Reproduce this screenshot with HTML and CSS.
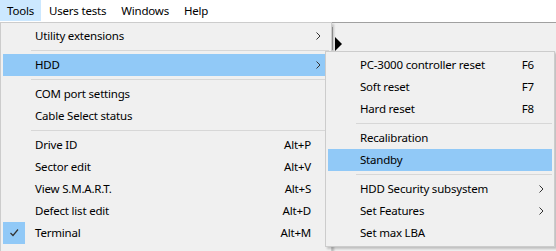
FILE: index.html
```html
<!DOCTYPE html>
<html lang="en">
<head>
    <meta charset="UTF-8">
    <meta name="viewport" content="width=device-width, initial-scale=1.0">
    <title>PC-3000 - Tools</title>
    <link rel="stylesheet" href="styles.css">
</head>
<body>
    <nav class="menubar">
        <span class="menubar-item active">Tools</span>
        <span class="menubar-item">Users tests</span>
        <span class="menubar-item">Windows</span>
        <span class="menubar-item">Help</span>
    </nav>

    <main class="workspace">
        <div class="grid-indicator"></div>
        <div class="row-marker"></div>
    </main>

    <!-- Tools dropdown -->
    <div class="menu menu-tools">
        <div class="menu-item"><span>Utility extensions</span><span class="shortcut"></span><span class="arrow"><svg width="5" height="8" viewBox="0 0 5 8"><polyline points="0.5,0.5 4,4 0.5,7.5" /></svg></span></div>
        <div class="separator"></div>
        <div class="menu-item highlight"><span>HDD</span><span class="shortcut"></span><span class="arrow"><svg width="5" height="8" viewBox="0 0 5 8"><polyline points="0.5,0.5 4,4 0.5,7.5" /></svg></span></div>
        <div class="separator"></div>
        <div class="menu-item"><span>COM port settings</span><span class="shortcut"></span><span class="arrow"></span></div>
        <div class="menu-item"><span>Cable Select status</span><span class="shortcut"></span><span class="arrow"></span></div>
        <div class="separator"></div>
        <div class="menu-item"><span>Drive ID</span><span class="shortcut">Alt+P</span><span class="arrow"></span></div>
        <div class="menu-item"><span>Sector edit</span><span class="shortcut">Alt+V</span><span class="arrow"></span></div>
        <div class="menu-item"><span>View S.M.A.R.T.</span><span class="shortcut">Alt+S</span><span class="arrow"></span></div>
        <div class="menu-item"><span>Defect list edit</span><span class="shortcut">Alt+D</span><span class="arrow"></span></div>
        <div class="menu-item">
            <span class="check"><svg width="22" height="22" viewBox="0 0 22 22"><polyline points="7.5,11 10,13.5 15,7.5" /></svg></span>
            <span>Terminal</span><span class="shortcut">Alt+M</span><span class="arrow"></span>
        </div>
        <div class="menu-item"><span>Buffer</span><span class="shortcut">Alt+B</span><span class="arrow"></span></div>
    </div>

    <!-- HDD submenu -->
    <div class="menu menu-hdd">
        <div class="menu-item"><span>PC-3000 controller reset</span><span class="shortcut">F6</span><span class="arrow"></span></div>
        <div class="menu-item"><span>Soft reset</span><span class="shortcut">F7</span><span class="arrow"></span></div>
        <div class="menu-item"><span>Hard reset</span><span class="shortcut">F8</span><span class="arrow"></span></div>
        <div class="separator"></div>
        <div class="menu-item"><span>Recalibration</span><span class="shortcut"></span><span class="arrow"></span></div>
        <div class="menu-item highlight"><span>Standby</span><span class="shortcut"></span><span class="arrow"></span></div>
        <div class="separator"></div>
        <div class="menu-item"><span>HDD Security subsystem</span><span class="shortcut"></span><span class="arrow"><svg width="5" height="8" viewBox="0 0 5 8"><polyline points="0.5,0.5 4,4 0.5,7.5" /></svg></span></div>
        <div class="menu-item"><span>Set Features</span><span class="shortcut"></span><span class="arrow"><svg width="5" height="8" viewBox="0 0 5 8"><polyline points="0.5,0.5 4,4 0.5,7.5" /></svg></span></div>
        <div class="menu-item"><span>Set max LBA</span><span class="shortcut"></span><span class="arrow"></span></div>
    </div>
</body>
</html>
```

FILE: styles.css
```css
/* Window */
* {
    box-sizing: border-box;
}

html,
body {
    margin: 0;
    height: 100%;
}

body {
    font-family: "Noto Sans", "Liberation Sans", sans-serif;
    font-size: 11.5px;
    letter-spacing: -0.2px;
    color: #000;
    background-color: #f0f0f0;
    position: relative;
    overflow: hidden;
    display: flex;
    flex-direction: column;
}

/* Menu bar */
.menubar {
    display: flex;
    height: 22px;
    background-color: #fff;
}

.menubar-item {
    height: 21px;
    line-height: 19px;
    padding: 0 6px;
    border: 1px solid transparent;
    white-space: nowrap;
}

.menubar-item + .menubar-item {
    padding: 0 6px 0 7px;
}

.menubar-item.active {
    background-color: #cce8ff;
    border-color: #cce8ff;
}

/* Application area behind the menus */
.workspace {
    flex: 1;
    display: flex;
    align-items: flex-start;
    border-top: 1px solid #a0a0a0;
    padding: 4px 0 0 331px;
}

.grid-indicator {
    width: 2px;
    height: 23px;
    background-color: #a8a8a8;
}

.row-marker {
    margin: 10px 0 0 2px;
    width: 0;
    height: 0;
    border-top: 7px solid transparent;
    border-bottom: 7px solid transparent;
    border-left: 7px solid #000;
}

/* Popup menus */
.menu {
    position: absolute;
    background-color: #f0f0f0;
    border: 1px solid #cccccc;
    padding: 2px;
    box-shadow: 2px 2px 2px rgba(0, 0, 0, 0.2);
}

.menu-tools {
    top: 22px;
    left: 0;
    width: 332px;
}

.menu-hdd {
    top: 51px;
    left: 325px;
    width: 230px;
}

.menu-item {
    position: relative;
    display: grid;
    grid-template-columns: 1fr auto 18px;
    align-items: center;
    height: 22px;
    padding: 0 0 1px 32px;
    white-space: nowrap;
}

.menu-item.highlight {
    background-color: #91c9f7;
}

.shortcut {
    text-align: right;
}

.arrow {
    display: flex;
    justify-content: flex-end;
    padding-right: 8px;
}

.arrow svg {
    display: block;
    fill: none;
    stroke: #333;
    stroke-width: 1;
}

.separator {
    height: 7px;
    padding: 3px 0 0 28px;
}

.separator::after {
    content: "";
    display: block;
    border-top: 1px solid #d7d7d7;
}

.check {
    position: absolute;
    left: 0;
    top: 0;
    width: 22px;
    height: 22px;
    background-color: #91c9f7;
}

.check svg {
    display: block;
    fill: none;
    stroke: #333;
    stroke-width: 1.2;
}
```
